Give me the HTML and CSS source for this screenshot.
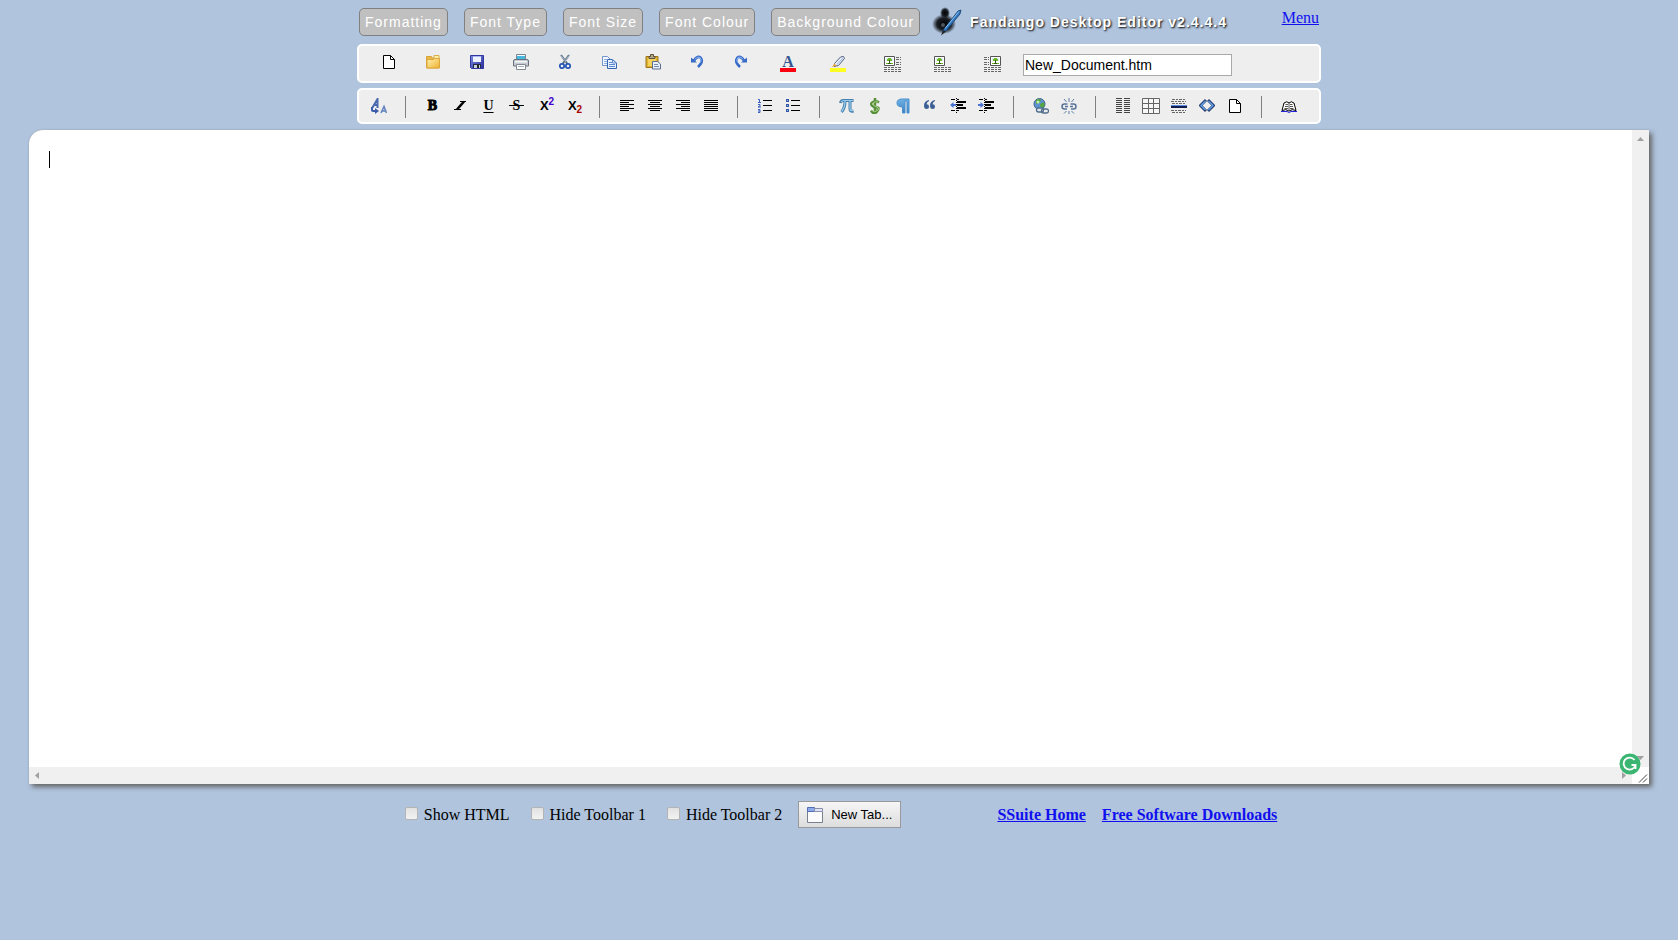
FILE: index.html
```
<!DOCTYPE html>
<html lang="en">
<head>
  <meta charset="UTF-8">
  <title>Fandango Desktop Editor</title>
  <meta name="viewport" content="width=device-width, initial-scale=1">
  <link rel="stylesheet" href="styles.css">
</head>
<body>
  <!-- shared shapes -->
  <svg class="defs" aria-hidden="true">
    <defs>
      <linearGradient id="gFolder" x1="0" y1="0" x2="1" y2="1">
        <stop offset="0" stop-color="#fff3b0"/><stop offset="1" stop-color="#eeb030"/>
      </linearGradient>
      <linearGradient id="gBlue" x1="0" y1="0" x2="0" y2="1">
        <stop offset="0" stop-color="#6fb2e4"/><stop offset="1" stop-color="#3d7fc0"/>
      </linearGradient>
      <linearGradient id="gSave" x1="0" y1="0" x2="1" y2="1">
        <stop offset="0" stop-color="#7a8ae0"/><stop offset="1" stop-color="#2a2f9c"/>
      </linearGradient>
      <radialGradient id="gInk">
        <stop offset="0" stop-color="#000"/><stop offset=".6" stop-color="#1b2026"/><stop offset="1" stop-color="#1b2026" stop-opacity="0"/>
      </radialGradient>
      <symbol id="page" viewBox="0 0 16 16">
        <path d="M2.500 1.500h7l4 4v9h-11z" fill="#fff" stroke="#000"/>
        <path d="M9.500 1.500v4h4" fill="none" stroke="#000"/>
      </symbol>
      <symbol id="photo" viewBox="0 0 11 10">
        <path d="M.5.5h10v9H.5z" fill="#fff" stroke="#555"/>
        <path d="M2 2h7v3H2z" fill="#d8ecfa"/>
        <path d="M4 2h3v1h1v2H3V3h1zM2 7h7v1H2z" fill="#6fb82a"/>
        <path d="M5 4h1v3h1v1H4V7h1z" fill="#2f5a10"/>
      </symbol>
      <symbol id="indentLines" viewBox="0 0 16 16">
        <path d="M1 1.500h4M7 1.500h2M1 12.500h4M7 12.500h2" stroke="#000"/>
        <path d="M7 4h9M7 7h6M7 10h9" stroke="#000" stroke-width="2"/>
        <path d="M6.500 0v15" stroke="#000" stroke-dasharray="1 1"/>
      </symbol>
    </defs>
  </svg>

  <header class="header">
    <!-- Menus -->
    <nav class="menubar">
      <button class="menu-btn">Formatting</button>
      <button class="menu-btn">Font Type</button>
      <button class="menu-btn">Font Size</button>
      <button class="menu-btn">Font Colour</button>
      <button class="menu-btn">Background Colour</button>
      <svg class="logo" viewBox="0 0 30 30">
        <ellipse cx="12" cy="17" rx="12" ry="10" fill="url(#gInk)"/>
        <ellipse cx="13" cy="6" rx="5" ry="6" fill="url(#gInk)"/>
        <circle cx="11" cy="18" r="2" fill="#4c545c"/>
        <path d="M10.500 24L26 4l3-1-1 4L14 24z" fill="#2f76bd" stroke="#173f6d" stroke-width=".8"/>
        <path d="M13 21.500L27 4.500" stroke="#8cc3f2" stroke-width="1"/>
        <path d="M11 23.500l3 1-5 4z" fill="#222"/>
      </svg>
      <span class="app-title">Fandango Desktop Editor v2.4.4.4</span>
      <a class="menu-link" href="#">Menu</a>
    </nav>

    <!-- Toolbar 1 -->
    <div class="toolbar toolbar1">
      <button class="tool" title="New"><svg class="icon"><use href="#page"/></svg></button>
      <button class="tool" title="Open"><svg class="icon" viewBox="0 0 16 16">
        <path d="M1.500 2.500h5l1 1.500h6v10h-12z" fill="#e9b848" stroke="#d9a437"/>
        <path d="M9 1.500h5v4H9z" fill="#fff0a8" stroke="#dcae48"/>
        <path d="M2 5.500h6.500l1-1h5v9.500H2z" fill="url(#gFolder)" stroke="#dca63a"/>
      </svg></button>
      <button class="tool" title="Save"><svg class="icon" viewBox="0 0 16 16">
        <path d="M1.500 1.500h13v13h-12l-1-1z" fill="url(#gSave)" stroke="#3037a0"/>
        <path d="M4 2h8v6H4z" fill="#eef3ff"/><path d="M4 2h8v1H4z" fill="#a9b8f5"/>
        <path d="M4 10h8v4H4z" fill="#222c44"/><path d="M5 11h6v3H5z" fill="#c8d2d8"/><path d="M8 11h2v3H8z" fill="#222"/>
      </svg></button>
      <button class="tool" title="Print"><svg class="icon" viewBox="0 0 16 16">
        <path d="M3.500.5h9v6h-9z" fill="#f4faff" stroke="#7b8790"/>
        <path d="M4 2h8v4H4z" fill="#48b7df"/>
        <path d="M2 5.500h12q1.500 0 1.500 1.500v5h-15V7Q.500 5.500 2 5.500z" fill="#c5cbd3" stroke="#68717b"/>
        <path d="M2 7h12v1.500H2z" fill="#f4f6f8"/>
        <path d="M3.500 10.500h9v5h-9z" fill="#fff" stroke="#818a94"/><path d="M5 12.500h6" stroke="#a9b1ba"/>
      </svg></button>
      <button class="tool" title="Cut"><svg class="icon" viewBox="0 0 16 16">
        <path d="M4 1l6.500 9M12 1L5.500 10" stroke="#5d7185" stroke-width="2"/>
        <path d="M4 1.500L9 8M12 1.500L8 7" stroke="#b9c8d6" stroke-width=".8"/>
        <circle cx="5" cy="12" r="2.200" fill="none" stroke="#2455b5" stroke-width="1.700"/>
        <circle cx="11" cy="12" r="2.200" fill="none" stroke="#2455b5" stroke-width="1.700"/>
      </svg></button>
      <button class="tool" title="Copy"><svg class="icon" viewBox="0 0 16 16">
        <path d="M1.500 2.500h5l3 3v6h-8z" fill="#f2f7ff" stroke="#7294cc"/>
        <path d="M3 5.500h3M3 7.500h4M3 9.500h4" stroke="#8eaee0"/>
        <path d="M6.500 5.500h5l4 3.500v5.500h-9z" fill="#e8f1ff" stroke="#3566b4"/>
        <path d="M11.500 5.500v3.500h4M8 8.500h3M8 10.500h6M8 12.500h6" fill="none" stroke="#5f8bd0"/>
      </svg></button>
      <button class="tool" title="Paste"><svg class="icon" viewBox="0 0 16 16">
        <path d="M1 2.500h12v11H1z" fill="#e0b12f" stroke="#9d741d"/>
        <path d="M3 4h8v8H3z" fill="#f3d35e"/>
        <path d="M4 4.500V2.500h1.500v-2h3v2H10v2z" fill="#b2a68b" stroke="#5c503a"/>
        <path d="M7.500 7.500h5l3 2.500v5h-8z" fill="#eaf0fa" stroke="#596f92"/>
        <path d="M9 10.500h4M9 12.500h5" stroke="#788eb0"/>
      </svg></button>
      <button class="tool" title="Undo"><svg class="icon" viewBox="0 0 16 16">
        <path d="M5 6.500q3.500-5 6.500-3 3.500 4-2.500 9.500" fill="none" stroke="#376bc8" stroke-width="2.600"/>
        <path d="M2 3.500v5h6z" fill="#376bc8"/>
        <path d="M6 5q3-3 5-1.500 2 2 .5 5" fill="none" stroke="#8fb5f2"/>
      </svg></button>
      <button class="tool" title="Redo"><svg class="icon" viewBox="0 0 16 16">
        <path d="M11 6.500Q7.500 1.500 4.500 3.500 1 7.500 7 13" fill="none" stroke="#376bc8" stroke-width="2.600"/>
        <path d="M14 3.500v5H8z" fill="#376bc8"/>
        <path d="M10 5Q7 2 5 3.500q-2 2-.5 5" fill="none" stroke="#8fb5f2"/>
      </svg></button>
      <button class="tool tool-wide" title="Font colour"><span class="swatch">A</span></button>
      <button class="tool tool-wide" title="Highlight"><svg class="icon-large" viewBox="0 0 18 18">
        <path d="M1 13h16v4H1z" fill="#ff2"/>
        <path d="M5.500 8.500L11.500 2l3-.5 1 2-6 7-4.500 1z" fill="#e7edf8" stroke="#53637c"/>
        <path d="M8 9.500l6-6.500" stroke="#9ab4de"/>
        <path d="M3 12l2.500-3.500 2 2z" fill="#efa633"/>
      </svg></button>
      <span class="spacer"></span>
      <button class="tool tool-wide" title="Image left"><svg class="icon-large" viewBox="0 0 18 18">
        <use href="#photo" x="1" y="1" width="11" height="10"/>
        <path d="M13 2.500h5M13 4.500h5M13 7.500h5M13 9.500h5M1 12.500h17M1 14.500h17M1 16.500h17" class="dashes"/>
      </svg></button>
      <button class="tool tool-wide" title="Image inline"><svg class="icon-large" viewBox="0 0 18 18">
        <use href="#photo" x="1" y="1" width="11" height="10"/>
        <path d="M1 12.500h17M1 14.500h17M1 16.500h17" class="dashes"/>
      </svg></button>
      <button class="tool tool-wide" title="Image right"><svg class="icon-large" viewBox="0 0 18 18">
        <use href="#photo" x="7" y="1" width="11" height="10"/>
        <path d="M1 2.500h5M1 4.500h5M1 7.500h5M1 9.500h5M1 12.500h17M1 14.500h17M1 16.500h17" class="dashes"/>
      </svg></button>
      <input class="filename" type="text" value="New_Document.htm" aria-label="File name" spellcheck="false">
    </div>

    <!-- Toolbar 2 -->
    <div class="toolbar toolbar2">
      <button class="tool" title="Change font"><svg class="icon" viewBox="0 0 16 16">
        <path d="M1.500 9.500L6.500 1v9M3 7h4" fill="none" stroke="#4a6ab0" stroke-width="2"/>
        <path d="M1 9v3q0 1 1 1h3" fill="none" stroke="#3a5cab" stroke-width="2"/><path d="M4 10l4 3-4 3z" fill="#3a5cab"/>
        <path d="M10 15l3-6.500L15.500 15M11 13h4" fill="none" stroke="#5f7fbd" stroke-width="1.500"/>
      </svg></button>
      <span class="sep"></span>
      <button class="tool letter bold" title="Bold">B</button>
      <button class="tool" title="Italic"><svg class="icon" viewBox="0 0 16 16">
        <path d="M7 3.500h6M1 11.500h7" stroke="#000"/><path d="M11 3.500l-7 8" stroke="#000" stroke-width="2.500"/>
      </svg></button>
      <button class="tool letter underline" title="Underline">U</button>
      <button class="tool letter strike" title="Strikethrough">&nbsp;S&nbsp;</button>
      <button class="tool letter script" title="Superscript">X<sup>2</sup></button>
      <button class="tool letter script" title="Subscript">X<sub>2</sub></button>
      <span class="sep"></span>
      <button class="tool" title="Align left"><svg class="icon" viewBox="0 0 16 16"><path class="line" d="M1 2.500h14M1 4.500h9M1 6.500h14M1 8.500h9M1 10.500h14M1 12.500h9"/></svg></button>
      <button class="tool" title="Align centre"><svg class="icon" viewBox="0 0 16 16"><path class="line" d="M1 2.500h14M3 4.500h10M1 6.500h14M3 8.500h10M1 10.500h14M3 12.500h10"/></svg></button>
      <button class="tool" title="Align right"><svg class="icon" viewBox="0 0 16 16"><path class="line" d="M1 2.500h14M6 4.500h9M1 6.500h14M6 8.500h9M1 10.500h14M6 12.500h9"/></svg></button>
      <button class="tool" title="Justify"><svg class="icon" viewBox="0 0 16 16"><path class="line" d="M1 2.500h14M1 4.500h14M1 6.500h14M1 8.500h14M1 10.500h14M1 12.500h14"/></svg></button>
      <span class="sep"></span>
      <button class="tool" title="Numbered list"><svg class="icon" viewBox="0 0 16 16">
        <path class="line" d="M6 2.500h9M6 7.500h9M6 12.500h9"/>
        <path d="M1 1.500h1.500v3M1 4.500h3M1 6.500h2v1.500l-2 1h3M1 11.500h2v3H1M1 13h2" fill="none" stroke="#3a5fc0"/>
      </svg></button>
      <button class="tool" title="Bullet list"><svg class="icon" viewBox="0 0 16 16">
        <path class="line" d="M6 2.500h9M6 7.500h9M6 12.500h9"/>
        <path d="M1 1h3v3H1zM1 6h3v3H1zM1 11h3v3H1z" fill="#3557a8"/><path d="M2 2h1v1H2zM2 7h1v1H2zM2 12h1v1H2z" fill="#8faae6"/>
      </svg></button>
      <span class="sep"></span>
      <button class="tool" title="Symbols"><svg class="icon" viewBox="0 0 16 16">
        <path d="M1.500 5Q2 2 5 2.500h9.500M6 3q0 7-3.500 11M11 3v8q0 3 3.500 2" fill="none" stroke="#467fae" stroke-width="3"/>
        <path d="M2 4q1-1.500 3-1.500h9M6 3q0 7-3.500 10.500M11 3v8q0 2 3 1.500" fill="none" stroke="#9accec" stroke-width="1.200"/>
      </svg></button>
      <button class="tool" title="Currency"><svg class="icon" viewBox="0 0 16 16">
        <path d="M12 4.500Q9 2.500 6 4t-1 3.500 5 2 0 4-6-.8M8 0v16" fill="none" stroke="#578f38" stroke-width="2.500"/>
        <path d="M11 4Q9 3 6.500 4.500t0 2.800 4.500 2.500-1 3-5-.5" fill="none" stroke="#abd187"/>
      </svg></button>
      <button class="tool" title="Paragraph"><svg class="icon" viewBox="0 0 16 16">
        <path d="M14 1v14h-2V3h-2v12H7.500V9Q2 9 2 5t5-4z" fill="url(#gBlue)" stroke="#4a90cf"/>
      </svg></button>
      <button class="tool" title="Quote"><svg class="icon" viewBox="0 0 16 16">
        <path id="q" d="M6 2Q1 3 1 7.500 1 11 3.500 11T6 8.500 3.500 6.200Q4 4 6 3z" fill="#3c5f96"/>
        <use href="#q" x="6"/>
      </svg></button>
      <button class="tool tool-left" title="Outdent"><svg class="icon" viewBox="0 0 16 16">
        <use href="#indentLines" width="16" height="16"/>
        <path d="M0 7l3.500-3v2H6v2H3.500v2z" fill="#4a74d4"/>
      </svg></button>
      <button class="tool tool-left" title="Indent"><svg class="icon" viewBox="0 0 16 16">
        <use href="#indentLines" width="16" height="16"/>
        <path d="M6 7L2.500 4v2H0v2h2.500v2z" fill="#4a74d4"/>
      </svg></button>
      <span class="sep"></span>
      <button class="tool" title="Insert link"><svg class="icon" viewBox="0 0 16 16">
        <circle cx="6.500" cy="6" r="5.500" fill="#5d92d2" stroke="#44648b"/>
        <path d="M3 2q4-2 5 0L6 5 3 6zM7 6l4-2 .5 4L8 11z" fill="#55a63c"/><circle cx="5" cy="4" r="1.500" fill="#c7edb5"/>
        <rect x="3.500" y="10" width="7" height="4" rx="2" fill="#e3eaf2" stroke="#526d8c" stroke-width="1.300"/>
        <rect x="8.500" y="11" width="7" height="4" rx="2" fill="none" stroke="#526d8c" stroke-width="1.300"/>
      </svg></button>
      <button class="tool" title="Remove link"><svg class="icon" viewBox="0 0 16 16">
        <path d="M6.500 6H3.500Q1 6 1 8.500T3.500 11H6M9.500 6h3Q15 6 15 8.500T12.500 11H10M4 8.500h3M9 8.500h3" fill="none" stroke="#58749a" stroke-width="1.500"/>
        <path d="M8 0v4M8 13v3M3 1l2.500 3M13 1l-2.500 3M3 15.500L5.500 13M13 15.500L10.500 13" stroke="#5c7ca5"/>
      </svg></button>
      <span class="sep"></span>
      <button class="tool" title="Columns"><svg class="icon" viewBox="0 0 16 16"><path class="line columns" d="M1 .5h6M9 .5h6M1 2.500h6M9 2.500h6M1 4.500h6M9 4.500h6M1 6.500h6M9 6.500h6M1 8.500h6M9 8.500h6M1 10.500h6M9 10.500h6M1 12.500h6M9 12.500h6M1 14.500h6M9 14.500h6"/></svg></button>
      <button class="tool" title="Table"><svg class="icon-large" viewBox="0 0 18 18"><path d="M.5 1.500h17v15H.5zM6.500 1v16M11.500 1v16M0 6.500h18M0 11.500h18" fill="#f7f7f7" stroke="#666"/></svg></button>
      <button class="tool" title="Horizontal line"><svg class="icon" viewBox="0 0 16 16">
        <path d="M1 1.500h14M0 3.500h15M1 5.500h14M0 12.500h15M1 14.500h14" class="dashes"/>
        <path d="M0 7h16v3H0z" fill="#101c50"/><path d="M0 7h16v1H0z" fill="#5b8ce0"/>
      </svg></button>
      <button class="tool" title="Source"><svg class="icon" viewBox="0 0 16 16">
        <path d="M7 2L1.500 7.500 7 13M9 2l5.500 5.500L9 13" fill="none" stroke="#263f71" stroke-width="3"/>
        <path d="M6.500 3L2 7.500 6.500 12M9.500 3L14 7.500 9.500 12" fill="none" stroke="#62a0e8" stroke-width="1.300"/>
      </svg></button>
      <button class="tool" title="New page"><svg class="icon"><use href="#page"/></svg></button>
      <span class="sep"></span>
      <button class="tool" title="Dictionary"><svg class="icon" viewBox="0 0 16 16">
        <path d="M1 12.500L3 5Q6 2.500 8 5q2-2.500 5 0l2 7.500q-4-2-7 .5-3-2.500-7-.5z" fill="#fff" stroke="#000"/>
        <path d="M8 5v8M4.500 6.500H7M4 8.500h3M3.500 10.500H7M9 6.500h2.500M9 8.500h3M9 10.500h3.500" stroke="#555"/>
        <path d="M0 13.500h6l2 1 2-1h6" fill="none" stroke="#22d"/>
      </svg></button>
    </div>
  </header>

  <!-- Document -->
  <main class="editor">
    <textarea class="document" aria-label="Document" spellcheck="false"></textarea>
    <span class="caret"></span>
    <div class="scroll scroll-y">
      <svg class="arrow" viewBox="0 0 17 17"><path d="M5 11l3.500-4 3.500 4z"/></svg>
      <svg class="arrow" viewBox="0 0 17 17"><path d="M5 6h7l-3.500 4z"/></svg>
    </div>
    <div class="scroll scroll-x">
      <svg class="arrow" viewBox="0 0 17 17"><path d="M10 5v7L6 8.500z"/></svg>
      <svg class="arrow" viewBox="0 0 17 17"><path d="M7 5v7l4-3.500z"/></svg>
    </div>
    <svg class="corner" viewBox="0 0 17 17"><path d="M7 15.500l8-8M11 15.500l4-4" stroke="#444" fill="none"/></svg>
    <svg class="grammar" viewBox="0 0 22 22">
      <circle cx="11" cy="11" r="10.500" fill="#3ab572"/>
      <path d="M15.500 7A6 6 0 1 0 16.500 12H12.500M16.500 12v4" fill="none" stroke="#fff" stroke-width="1.800"/>
    </svg>
  </main>

  <footer class="footer">
    <label class="option"><input type="checkbox"> Show HTML</label>
    <label class="option"><input type="checkbox"> Hide Toolbar 1</label>
    <label class="option"><input type="checkbox"> Hide Toolbar 2</label>
    <button class="new-tab">
      <svg class="icon" viewBox="0 0 16 16">
        <path d="M.5 1.500h7v3h8v11H.5z" fill="#fbfbfb" stroke="#77808f"/>
        <path d="M.5.5h7v4h-7z" fill="#8faae8" stroke="#526fb5"/><path d="M7.500 1.500h8v3h-8z" fill="#dfe3f3" stroke="#8990ad"/>
      </svg>
      New Tab...
    </button>
    <nav class="links">
      <a href="#">SSuite Home</a>
      <a href="#">Free Software Downloads</a>
    </nav>
  </footer>
</body>
</html>
```
FILE: styles.css
```
* { box-sizing: border-box; }

body {
  margin: 0;
  padding: 8px 29px;
  background: #b0c4de;
  color: #000;
  font-family: "Liberation Serif", "Times New Roman", serif;
  font-size: 16px;
}

a { color: #1010ee; }
button { font-family: "Liberation Sans", Arial, sans-serif; cursor: pointer; }
.defs { position: absolute; width: 0; height: 0; }

.header {
  max-width: 964px;
  margin: 0 auto;
}

/* Menus */
.menubar {
  display: flex;
  align-items: center;
  gap: 16px;
  padding: 0 2px;
}
.menu-btn {
  height: 28px;
  padding: 0 5px;
  background: #c0c0c0;
  border: 1px solid #808080;
  border-radius: 5px;
  color: #fff;
  font-size: 14px;
  letter-spacing: 1px;
  white-space: nowrap;
}
.logo {
  width: 30px;
  height: 30px;
  margin: -1px -8px -1px -4px;
}
.app-title {
  color: #fff;
  font-family: "Liberation Sans", Arial, sans-serif;
  font-size: 14px;
  font-weight: bold;
  letter-spacing: 1px;
  text-shadow: 1px 1px 2px #000;
  white-space: nowrap;
}
.menu-link {
  align-self: flex-start;
  margin-left: auto;
  line-height: 20px;
}

/* Toolbars */
.toolbar {
  display: flex;
  align-items: center;
  background: #eee;
  border: 2px solid #fff;
  border-radius: 5px;
}
.toolbar1 {
  height: 39px;
  margin-top: 8px;
  padding: 0 8px;
}
.toolbar2 {
  height: 36px;
  margin-top: 5px;
  padding: 0 6px;
}
.tool {
  display: flex;
  align-items: center;
  justify-content: center;
  width: 28px;
  height: 24px;
  padding: 0;
  background: none;
  border: 0;
  color: #000;
}
.toolbar1 .tool { width: 44px; padding-bottom: 3px; }
.toolbar1 .tool-wide { width: 50px; padding-bottom: 0; }
.tool-left { padding-right: 2px; }
.spacer { width: 4px; }
.icon { width: 16px; height: 16px; }
.icon-large { width: 18px; height: 18px; flex: none; }
.line { stroke: #000; }
.columns { stroke: #444; }
.dashes {
  fill: none;
  stroke: #666;
  stroke-dasharray: 3 1 2 1;
}
.sep {
  width: 1px;
  height: 22px;
  margin: 2px 13px 0 12px;
  background: #808080;
}

.swatch {
  width: 16px;
  height: 17px;
  border-bottom: 4px solid #f01;
  color: #35558f;
  font: bold 16px/13px "Liberation Serif", serif;
}
.letter {
  padding-right: 1px;
  font: bold 14px/16px "Liberation Serif", serif;
}
.bold { -webkit-text-stroke: 1px #000; }
.underline { text-decoration: underline; text-underline-offset: 2px; }
.strike { text-decoration: line-through; }
.script {
  padding: 0 0 0 4px;
  font-family: "Liberation Sans", Arial, sans-serif;
  font-size: 13px;
}
.script sup, .script sub {
  font-size: 10px;
  line-height: 10px;
}
.script sup { margin-bottom: 8px; color: #40c; }
.script sub { margin-top: 8px; color: #a00; }

.filename {
  width: 209px;
  height: 22px;
  margin: 3px 0 0 6px;
  padding: 0 1px;
  border: 1px solid #a9a9a9;
  background: #fff;
  color: #000;
  font-family: "Liberation Sans", Arial, sans-serif;
  font-size: 14px;
}

/* Document */
.editor {
  position: relative;
  display: grid;
  grid-template: 1fr 17px / 1fr 17px;
  height: 654px;
  margin-top: 6px;
  background: #fff;
  border-radius: 14px 0 0 0;
  box-shadow: 3px 3px 5px #666, 0 0 1px #888;
}
.document {
  width: 100%;
  height: 100%;
  padding: 20px;
  background: none;
  border: 0;
  outline: 0;
  resize: none;
  font-family: inherit;
  font-size: 16px;
}
.caret {
  position: absolute;
  top: 21px;
  left: 20px;
  width: 1px;
  height: 17px;
  background: #000;
}
.scroll {
  display: flex;
  justify-content: space-between;
  background: #f0f0f0;
}
.scroll-y { flex-direction: column; }
.arrow { width: 17px; height: 17px; fill: #a0a0a0; }
.corner { width: 17px; height: 17px; background: #fff; }
.grammar {
  position: absolute;
  right: 8px;
  bottom: 9px;
  width: 22px;
  height: 22px;
}

/* Bottom options */
.footer {
  display: flex;
  align-items: center;
  justify-content: center;
  margin-top: 17px;
  padding-left: 4px;
  white-space: nowrap;
}
.option {
  display: flex;
  align-items: center;
  gap: 6px;
  margin-right: 21px;
}
.option input {
  appearance: none;
  width: 13px;
  height: 13px;
  margin: 0 0 2px;
  background: linear-gradient(#e2e2e2, #f2f2f2);
  border: 1px solid #b4b4b4;
  border-radius: 2px;
}
.option input:checked { background: #4a74d4; }
.new-tab {
  display: flex;
  align-items: center;
  gap: 8px;
  height: 27px;
  margin-left: -5px;
  padding: 0 8px;
  background: linear-gradient(#f6f6f6, #ddd);
  border: 1px solid #999;
  color: #000;
  font-size: 13px;
}
.links {
  display: flex;
  gap: 16px;
  margin-left: 96px;
  font-weight: bold;
}
```
